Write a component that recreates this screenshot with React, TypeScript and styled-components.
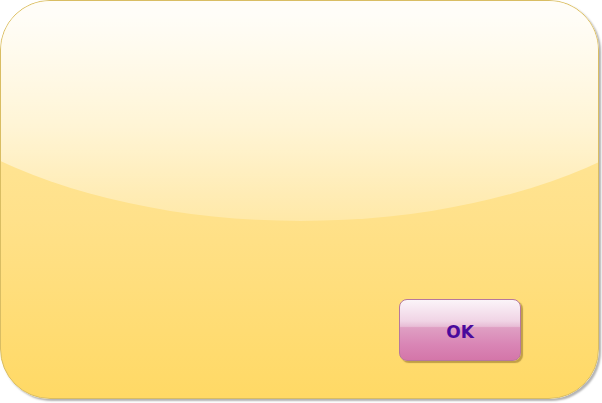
import React from "react";
import styled, { createGlobalStyle } from "styled-components";

const Global = createGlobalStyle`
  html, body { margin: 0; padding: 0; background: #ffffff; }
  #root { width: 602px; height: 403px; }
`;

const Panel = styled.div`
  position: relative;
  box-sizing: border-box;
  width: 599px;
  height: 399px;
  border: 1px solid #d9bd63;
  border-radius: 50px;
  background: linear-gradient(to bottom, #ffeaa6 0%, #ffe18a 55%, #ffd965 100%);
  box-shadow: 2px 2px 2px rgba(0, 0, 0, 0.3);
  overflow: hidden;
  display: flex;
  justify-content: flex-end;
  align-items: flex-end;
  padding: 0 77px 37px 0;
  &::before {
    content: "";
    position: absolute;
    left: -150px;
    width: 900px;
    top: -250px;
    height: 470px;
    border-radius: 50%;
    background: linear-gradient(
      to bottom,
      rgba(255, 255, 255, 0.95) 0%,
      rgba(255, 255, 255, 0.92) 56%,
      rgba(255, 255, 255, 0.6) 80%,
      rgba(255, 255, 255, 0.25) 100%
    );
    pointer-events: none;
  }
`;

const OkButton = styled.button`
  position: relative;
  z-index: 1;
  box-sizing: border-box;
  width: 122px;
  height: 62px;
  border: 1px solid #b6789e;
  border-radius: 8px;
  background: linear-gradient(
    to bottom,
    #fbf4f9 0%,
    #f0d4e5 35%,
    #e8bdd6 44%,
    #df9fc3 46%,
    #d985b5 75%,
    #d476a9 100%
  );
  box-shadow: 2px 2px 1px rgba(140, 110, 40, 0.55);
  font-family: "Comic Sans MS", "DejaVu Sans", sans-serif;
  font-size: 17px;
  font-weight: 600;
  color: #4a0a9c;
  padding: 4px 0 0 0;
  cursor: pointer;
`;

export default function App() {
  return (
    <>
      <Global />
      <Panel>
        <OkButton>OK</OkButton>
      </Panel>
    </>
  );
}
